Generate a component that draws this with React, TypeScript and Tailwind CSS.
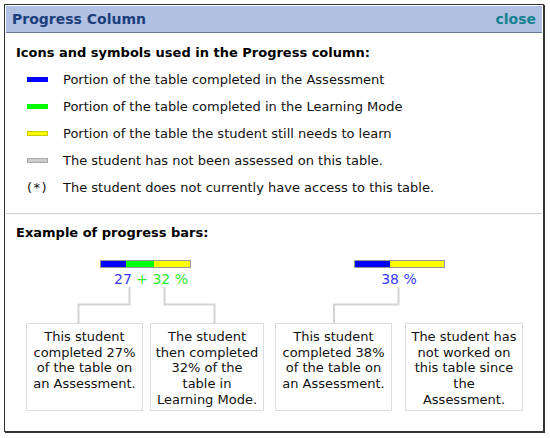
import React from "react";

const font = { fontFamily: '"DejaVu Sans", Verdana, sans-serif' };

const legend: { sym: React.ReactNode; text: string }[] = [
  { sym: <div className="w-[21px] h-[5px] bg-[#0000ff]" />, text: "Portion of the table completed in the Assessment" },
  { sym: <div className="w-[21px] h-[5px] bg-[#00ff00]" />, text: "Portion of the table completed in the Learning Mode" },
  { sym: <div className="w-[21px] h-[5px] bg-[#ffff00] border border-[#c8c800]" />, text: "Portion of the table the student still needs to learn" },
  { sym: <div className="w-[21px] h-[5px] bg-[#cccccc] border border-[#aaaaaa]" />, text: "The student has not been assessed on this table." },
  { sym: <span className="tracking-[1.5px]">(*)</span>, text: "The student does not currently have access to this table." },
];

function Box({ w, children }: { w: string; children: React.ReactNode }) {
  return (
    <div className={`${w} h-[88px] border border-[#dddddd] px-[2px] pt-[5px] text-center text-[13px] leading-[15.7px] text-[#111]`}>
      {children}
    </div>
  );
}

export default function App() {
  return (
    <div className="w-[550px] h-[438px] bg-white p-[4px]" style={font}>
      <div className="w-[540px] h-[428px] border border-[#333333] shadow-[1px_1px_0_#333333] bg-white p-[1px] flex flex-col">
        <div className="h-[27px] bg-[#b0c1e3] border-b border-[#6a7a9a] flex items-center justify-between pl-[6px] pr-[6px]">
          <span className="text-[14px] font-bold text-[#1c3f7c]">Progress Column</span>
          <span className="text-[14px] font-bold text-[#17808f]">close</span>
        </div>
        <div className="px-[10px] pt-[12px] pb-[12px] border-b border-[#cccccc]">
          <div className="h-[16px] leading-[16px] text-[13px] font-bold text-black">
            Icons and symbols used in the Progress column:
          </div>
          <div className="mt-[5px] pl-[11px]">
            {legend.map((l, i) => (
              <div key={i} className="h-[27px] flex items-center text-[13px] text-[#111]">
                <div className="w-[36px] flex items-center">{l.sym}</div>
                <span>{l.text}</span>
              </div>
            ))}
          </div>
        </div>
        <div className="px-[10px] pt-[11px]">
          <div className="h-[16px] leading-[16px] text-[13px] font-bold text-black">Example of progress bars:</div>
          <div className="flex ml-[10px] mt-[19px]">
            <div className="w-[238px] flex flex-col">
              <div className="flex justify-center">
                <div className="w-[91px] h-[8px] border border-[#999999] flex">
                  <div className="w-[25px] bg-[#0000ff]" />
                  <div className="w-[28px] bg-[#00ff00]" />
                  <div className="flex-1 bg-[#ffff00]" />
                </div>
              </div>
              <div className="mt-[3px] h-[16px] leading-[16px] text-[14px] text-center pl-[12px]">
                <span className="text-[#3a3aff]">27</span>
                <span className="text-[#2ee82e]"> + 32 %</span>
              </div>
              <svg width="238" height="36" className="block">
                <path d="M103.5 0 V17.5 H52.5 V36" fill="none" stroke="#d4d4d4" strokeWidth="2" />
                <path d="M138.5 0 V17.5 H188.5 V36" fill="none" stroke="#d4d4d4" strokeWidth="2" />
              </svg>
              <div className="flex gap-[7px]">
                <Box w="w-[117px]">This student completed 27% of the table on an Assessment.</Box>
                <Box w="w-[114px]">The student then completed 32% of the table in Learning Mode.</Box>
              </div>
            </div>
            <div className="w-[248px] ml-[11px] flex flex-col">
              <div className="flex justify-center">
                <div className="w-[91px] h-[8px] border border-[#999999] flex">
                  <div className="w-[35px] bg-[#0000ff]" />
                  <div className="flex-1 bg-[#ffff00]" />
                </div>
              </div>
              <div className="mt-[3px] h-[16px] leading-[16px] text-[14px] text-center">
                <span className="text-[#3a3aff]">38 %</span>
              </div>
              <svg width="248" height="36" className="block">
                <path d="M123.5 0 V17.5 H59 V36" fill="none" stroke="#d4d4d4" strokeWidth="2" />
              </svg>
              <div className="flex gap-[13px]">
                <Box w="w-[117px]">This student completed 38% of the table on an Assessment.</Box>
                <Box w="w-[118px]">
                  The student has
                  <br />
                  not worked on
                  <br />
                  this table since
                  <br />
                  the
                  <br />
                  Assessment.
                </Box>
              </div>
            </div>
          </div>
        </div>
      </div>
    </div>
  );
}
